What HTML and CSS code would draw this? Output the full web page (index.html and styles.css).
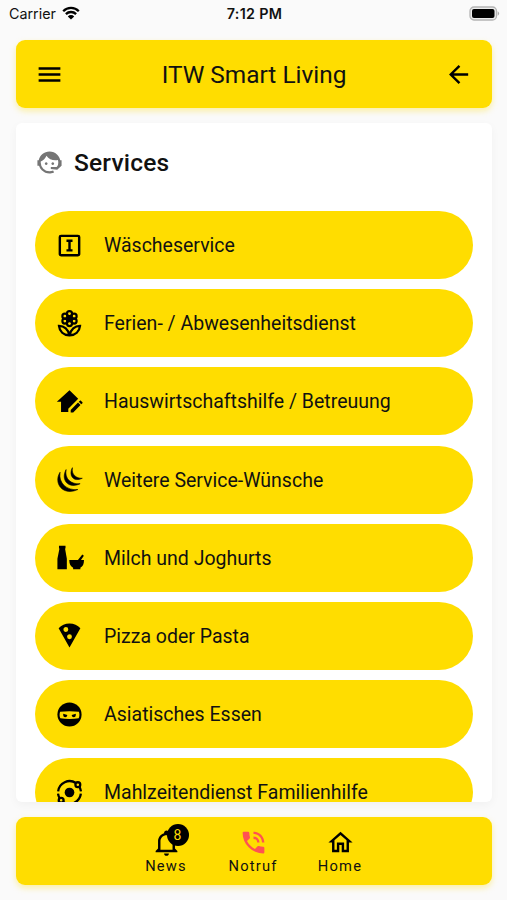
FILE: index.html
```
<!DOCTYPE html>
<html lang="de">
<head>
    <meta charset="UTF-8">
    <meta name="viewport" content="width=device-width, initial-scale=1.0">
    <title>ITW Smart Living</title>
    <link rel="stylesheet" href="styles.css">
</head>
<body>

<div class="status-bar">
    <div class="carrier">
        <span>Carrier</span>
        <svg class="wifi" viewBox="0 0 18 14">
            <path d="M1.2 5.2A11 11 0 0 1 16.8 5.2M3.9 8.1A7.2 7.2 0 0 1 14.1 8.1" fill="none" stroke="#000" stroke-width="2.3"/>
            <path d="M9 13.6L5.8 10.4A4.6 4.6 0 0 1 12.2 10.4Z"/>
        </svg>
    </div>
    <div class="time">7:12 PM</div>
    <div class="battery-wrap">
        <svg class="battery" viewBox="0 0 31 15">
            <rect x="1" y="1" width="26.5" height="13" rx="4" fill="#ececec" stroke="#b4b4b4" stroke-width="1.3"/>
            <rect x="3" y="3" width="22.5" height="9" rx="2"/>
            <path d="M28.7 5.2A2.6 2.6 0 0 1 28.7 9.8Z" fill="#aaa"/>
        </svg>
    </div>
</div>

<header class="app-bar">
    <svg class="icon" viewBox="0 0 24 24"><path d="M3,6H21V8H3V6M3,11H21V13H3V11M3,16H21V18H3V16Z"/></svg>
    <h1>ITW Smart Living</h1>
    <svg class="icon" viewBox="0 0 24 24"><path d="M20,11V13H8L13.5,18.5L12.08,19.92L4.16,12L12.08,4.08L13.5,5.5L8,11H20Z"/></svg>
</header>

<main class="card">
    <div class="card-title">
        <svg class="icon" viewBox="0 0 24 24"><path d="M18.72,14.76C19.07,13.91 19.26,13 19.26,12C19.26,11.28 19.15,10.59 18.96,9.95C18.31,10.1 17.63,10.18 16.92,10.18C13.86,10.18 11.15,8.67 9.5,6.34C8.61,8.5 6.91,10.26 4.77,11.22C4.73,11.47 4.73,11.74 4.73,12A7.27,7.27 0 0,0 12,19.27C13.05,19.27 14.06,19.04 14.97,18.63C15.54,19.72 15.8,20.26 15.78,20.26C14.14,20.81 12.87,21.08 12,21.08C9.58,21.08 7.27,20.13 5.57,18.42C4.53,17.38 3.76,16.11 3.33,14.73H2V10.18H3.09C3.93,6.04 7.6,2.92 12,2.92C14.4,2.92 16.71,3.87 18.42,5.58C19.69,6.84 20.54,8.45 20.89,10.18H22V14.73H21.94L18.38,18L13.08,17.4V15.73H17.91L18.72,14.76M9.27,11.77A1.14,1.14 0 1,1 9.26,11.77ZM14.72,11.77A1.14,1.14 0 1,1 14.71,11.77Z"/></svg>
        <h2>Services</h2>
    </div>
    <div class="services">
        <div class="service">
            <svg class="icon" viewBox="0 0 24 24"><path fill-rule="evenodd" d="M5,3H19A2,2 0 0,1 21,5V19A2,2 0 0,1 19,21H5A2,2 0 0,1 3,19V5A2,2 0 0,1 5,3ZM5,5V19H19V5ZM9.5,7H14.5V9H13V15H14.5V17H9.5V15H11V9H9.5Z"/></svg>
            <span>Wäscheservice</span>
        </div>
        <div class="service">
            <svg class="icon" viewBox="0 0 24 24">
                <g fill="none" stroke="#000" stroke-width="1.8">
                    <circle cx="12" cy="3.9" r="2.1"/><circle cx="15.8" cy="5.9" r="2.1"/><circle cx="15.8" cy="10" r="2.1"/>
                    <circle cx="12" cy="12" r="2.1"/><circle cx="8.2" cy="10" r="2.1"/><circle cx="8.2" cy="5.900" r="2.1"/>
                </g>
                <circle cx="12" cy="8" r="3"/>
                <path fill="none" stroke="#000" stroke-width="1.9" d="M3.300 14C7.500 14 11.200 16.800 11.800 21.800C7.200 21.500 3.700 18.500 3.300 14ZM20.700 14C16.500 14 12.800 16.800 12.200 21.800C16.800 21.500 20.300 18.500 20.700 14Z"/>
            </svg>
            <span>Ferien- / Abwesenheitsdienst</span>
        </div>
        <div class="service">
            <svg class="icon" viewBox="0 0 24 24"><path d="M12,2.700L1.500,12.300H5V20.600H11V17.900L19.200,9.700ZM21.040,11.140C20.900,11.140 20.760,11.200 20.650,11.300L19.650,12.300L21.700,14.350L22.700,13.350C22.920,13.140 22.920,12.790 22.700,12.580L21.420,11.300C21.320,11.200 21.180,11.140 21.040,11.140M19.060,12.880L13,18.940V21H15.060L21.110,14.930L19.060,12.880Z"/></svg>
            <span>Hauswirtschaftshilfe / Betreuung</span>
        </div>
        <div class="service">
            <svg class="icon" viewBox="0 0 24 24"><path d="M4.200 6C-1.600 15 6.500 26 18.900 20.300C10 21.400 2.600 15 4.200 6ZM9.200 3.800C4.500 12.300 11 20.200 20.800 15.500C13.500 16.200 7.700 11.600 9.200 3.800ZM14.400 2.200C10.900 8.600 15.500 14.600 22.600 11C17.500 11.200 13.400 7.800 14.400 2.200Z" stroke="#000" stroke-width=".5"/></svg>
            <span>Weitere Service-Wünsche</span>
        </div>
        <div class="service">
            <svg class="icon" viewBox="0 0 24 24"><path d="M3.300 2.200H8.700V4.500H8.300L9.800 13V21.800H2V13L3.700 4.500H3.300ZM11.800 14H19L22.600 9.500L23.900 10.600L21.500 14H24C24 17.500 23 19.300 21 20.500V21.800H15V20.500C13 19.300 11.800 17.500 11.800 14Z"/></svg>
            <span>Milch und Joghurts</span>
        </div>
        <div class="service">
            <svg class="icon" viewBox="0 0 24 24"><path d="M12,15A2,2 0 0,1 10,13C10,11.890 10.900,11 12,11A2,2 0 0,1 14,13A2,2 0 0,1 12,15M7,7C7,5.890 7.890,5 9,5A2,2 0 0,1 11,7A2,2 0 0,1 9,9C7.890,9 7,8.100 7,7M12,2C8.430,2 5.230,3.540 3,6L12,22L21,6C18.780,3.540 15.570,2 12,2Z"/></svg>
            <span>Pizza oder Pasta</span>
        </div>
        <div class="service">
            <svg class="icon" viewBox="0 0 24 24">
                <circle cx="12" cy="12" r="10"/>
                <path fill="#ffdd00" d="M4.200 9.800C9 9.200 15 9.200 19.800 9.800C20.500 12.200 20.200 14 19.600 15C15 15.900 9 15.900 4.400 15C3.800 14 3.500 12.200 4.200 9.800Z"/>
                <path d="M6.800 11.300L10.200 12.500A1.700 1.700 0 0 1 6.800 12.700ZM17.200 11.300L13.800 12.500A1.700 1.700 0 0 0 17.200 12.700Z"/>
            </svg>
            <span>Asiatisches Essen</span>
        </div>
        <div class="service">
            <svg class="icon" viewBox="0 0 24 24">
                <circle cx="12" cy="12" r="4"/>
                <g fill="none" stroke="#000" stroke-width="1.900">
                    <path d="M2.600 11A9.600 9.600 0 0 1 17.300 4.100M21.400 13A9.600 9.600 0 0 1 6.700 19.900"/>
                    <circle cx="18.900" cy="5.500" r="2"/><circle cx="5.100" cy="18.500" r="2"/>
                    <path d="M20.100 7.100A9.600 9.600 0 0 1 21.500 11M3.900 16.900A9.600 9.600 0 0 1 2.500 13"/>
                </g>
            </svg>
            <span>Mahlzeitendienst Familienhilfe</span>
        </div>
    </div>
</main>

<nav class="bottom-nav">
    <div class="nav-item">
        <div class="nav-icon">
            <svg class="icon" viewBox="0 0 24 24"><path d="M10 21H14C14 22.100 13.100 23 12 23S10 22.100 10 21M21 19V20H3V19L5 17V11C5 7.900 7 5.200 10 4.300V4C10 2.900 10.900 2 12 2S14 2.900 14 4V4.300C17 5.200 19 7.900 19 11V17L21 19M17 11C17 8.200 14.800 6 12 6S7 8.200 7 11V18H17V11Z"/></svg>
            <span class="badge">8</span>
        </div>
        <span>News</span>
    </div>
    <div class="nav-item">
        <svg class="icon emergency" viewBox="0 0 24 24"><path d="M15,12H17A5,5 0 0,0 12,7V9A3,3 0 0,1 15,12M19,12H21C21,7 16.970,3 12,3V5C15.860,5 19,8.130 19,12M20,15.500C18.750,15.500 17.550,15.300 16.430,14.930C16.080,14.820 15.690,14.900 15.410,15.180L13.210,17.380C10.380,15.940 8.060,13.620 6.620,10.790L8.820,8.590C9.100,8.310 9.180,7.920 9.070,7.570C8.700,6.450 8.500,5.250 8.500,4A1,1 0 0,0 7.500,3H4A1,1 0 0,0 3,4A17,17 0 0,0 20,21A1,1 0 0,0 21,20V16.500A1,1 0 0,0 20,15.500Z"/></svg>
        <span>Notruf</span>
    </div>
    <div class="nav-item">
        <svg class="icon" viewBox="0 0 24 24"><path d="M12 5.690L17 10.190V18H15V12H9V18H7V10.190L12 5.690M12 3L2 12H5V20H11V14H13V20H19V12H22"/></svg>
        <span>Home</span>
    </div>
</nav>

</body>
</html>
```
FILE: styles.css
```
* {
    box-sizing: border-box;
}
body {
    font-family: Roboto, sans-serif;
    margin: 0;
    padding: 0 15px 15px 16px;
    height: 900px;
    display: flex;
    flex-direction: column;
    overflow: hidden;
    background-color: #fafafa;
    color: #111;
}
h1, h2 {
    margin: 0;
}
.icon {
    display: block;
    flex: none;
    width: 29px;
    height: 29px;
    fill: #000;
}
.status-bar {
    display: grid;
    grid-template-columns: 1fr auto 1fr;
    align-items: center;
    height: 27px;
    margin: 0 -8px 13px -7px;
    font-family: Inter, sans-serif;
    font-size: 14.3px;
}
.carrier {
    display: flex;
    align-items: center;
    gap: 6px;
}
.wifi {
    width: 18px;
    height: 14px;
    margin-top: -2px;
}
.time {
    font-weight: 600;
    letter-spacing: 0.3px;
}
.battery-wrap {
    display: flex;
    justify-content: flex-end;
}
.battery {
    width: 31px;
    height: 15px;
    margin-top: -1px;
}
.app-bar {
    flex: none;
    height: 68px;
    display: flex;
    align-items: center;
    justify-content: space-between;
    padding: 0 19px;
    background-color: #ffdd00;
    border-radius: 9px;
    box-shadow: 0 3px 6px rgba(255, 221, 0, 0.35);
}
.app-bar h1 {
    font-size: 24.4px;
    font-weight: 400;
}
.card {
    flex: 1;
    min-height: 0;
    margin: 15px 0;
    padding: 0 19px;
    overflow: hidden;
    background-color: #fff;
    border-radius: 6px;
    box-shadow: 0 3px 10px rgba(0, 0, 0, 0.04);
}
.card-title {
    display: flex;
    align-items: center;
    gap: 10px;
    height: 78px;
    margin-bottom: 10px;
}
.card-title .icon {
    fill: #757575;
}
.card-title h2 {
    font-size: 24.5px;
    font-weight: 500;
    letter-spacing: 0.2px;
}
.services {
    display: flex;
    flex-direction: column;
    gap: 10.2px;
}
.service {
    flex: none;
    display: flex;
    align-items: center;
    gap: 20px;
    height: 68px;
    padding: 1px 20px 0;
    border-radius: 34px;
    background-color: #ffdd00;
    font-size: 19.5px;
}
.service .icon {
    margin-top: -1px;
}
.bottom-nav {
    flex: none;
    height: 68px;
    display: flex;
    justify-content: center;
    padding-right: 2px;
    background-color: #ffdd00;
    border-radius: 9px;
    box-shadow: 0 3px 6px rgba(255, 221, 0, 0.35);
}
.nav-item {
    width: 87px;
    padding-top: 11px;
    display: flex;
    flex-direction: column;
    align-items: center;
    font-size: 14.7px;
    line-height: 19px;
    letter-spacing: 1.2px;
}
.nav-icon {
    position: relative;
}
.badge {
    position: absolute;
    top: -4px;
    left: 15px;
    width: 22px;
    height: 22px;
    border-radius: 50%;
    background-color: #000;
    color: #ffdd00;
    font-size: 14px;
    line-height: 22px;
    letter-spacing: 0;
    text-align: center;
}
.emergency {
    fill: #ff5252;
}
```
